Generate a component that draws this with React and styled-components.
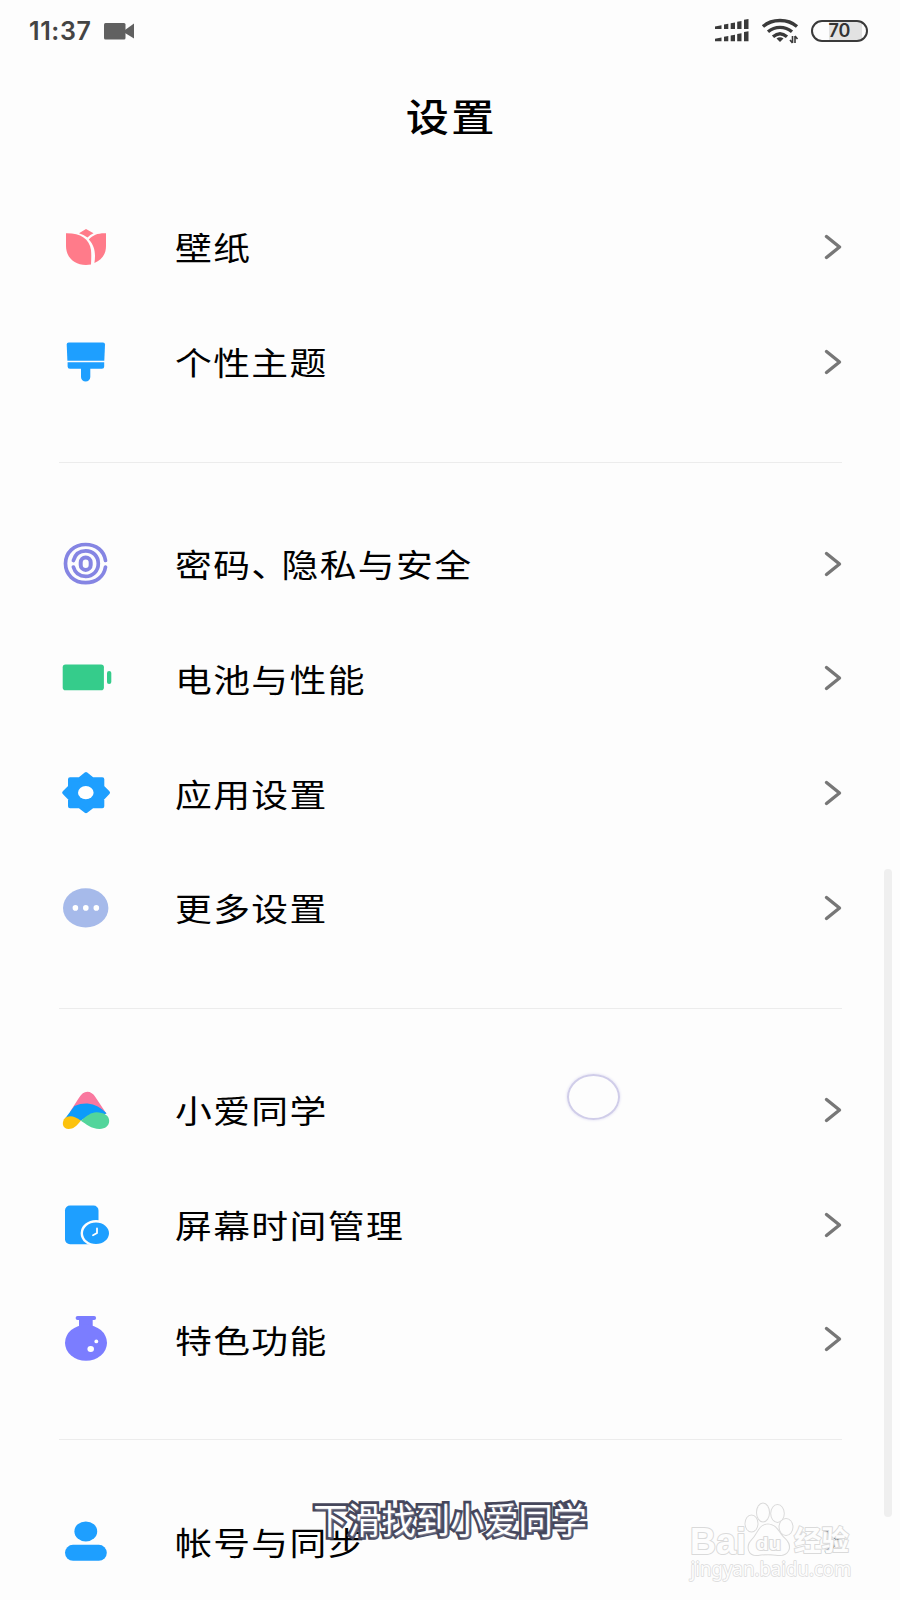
import styled, { createGlobalStyle } from "styled-components";

const GlobalStyle = createGlobalStyle`
  * {
    box-sizing: border-box;
  }
  body {
    margin: 0;
    background-color: #fdfdfd;
    font-family: "Noto Sans CJK SC", sans-serif;
  }
`;

const Screen = styled.main`
  position: relative;
  width: 900px;
  height: 1600px;
  overflow: hidden;
  background-color: #fdfdfd;
`;

const StatusBar = styled.header`
  height: 62px;
  padding: 0 32px 0 29px;
  display: flex;
  align-items: center;
  justify-content: space-between;
`;
const StatusGroup = styled.div`
  display: flex;
  align-items: center;
`;
const Clock = styled.span`
  width: 62px;
  margin-right: 13px;
  font-family: Inter, sans-serif;
  font-size: 25px;
  font-weight: 600;
  line-height: 30px;
  letter-spacing: 0.6px;
  white-space: nowrap;
  color: #444444;
`;
const BatteryPill = styled.span`
  width: 57px;
  height: 22px;
  margin-left: 12px;
  display: flex;
  align-items: center;
  justify-content: center;
  border: 2px solid #3a3a3a;
  border-radius: 11px;
  background: linear-gradient(
    90deg,
    #fdfdfd 30%,
    #e2e2e2 30%,
    #e2e2e2 92%,
    #fdfdfd 92%
  );
  font-family: Inter, sans-serif;
  font-size: 18px;
  font-weight: 600;
  line-height: 18px;
  color: #333333;
`;
const WifiSvg = styled.svg`
  width: 37px;
  height: 26px;
  margin-left: 13px;
`;

const Title = styled.h1`
  height: 127.6px;
  margin: 0;
  padding-top: 30px;
  text-align: center;
  font-size: 37.5px;
  font-weight: 500;
  line-height: 46px;
  letter-spacing: 2px;
  text-indent: 2px;
  color: #000000;
  transform: scaleX(1.15);
`;

const Group = styled.section`
  margin: 0 58px 0 59px;

  & + & {
    margin-top: 43px;
    padding-top: 43.7px;
    border-top: 1px solid #ececec;
  }
`;
const Row = styled.div`
  height: 114.62px;
  margin-right: -1px;
  padding-left: 1px;
  display: flex;
  align-items: center;
`;
const RowIcon = styled.svg`
  width: 52px;
  height: 52px;
  flex: none;
  overflow: visible;
`;
const Label = styled.span`
  flex: 1;
  margin-left: 62.5px;
  padding-bottom: 1px;
  font-size: 32px;
  font-weight: 400;
  line-height: 46px;
  letter-spacing: 1.2px;
  white-space: nowrap;
  color: #000000;
  transform: scaleX(1.15);
  transform-origin: left;
`;
const Comma = styled.span`
  margin-right: -7px;
`;
const Chevron = styled.svg`
  width: 20px;
  height: 28px;
  flex: none;
`;

const ScrollThumb = styled.div`
  position: absolute;
  top: 869px;
  left: 884px;
  width: 8px;
  height: 648px;
  border-radius: 4px;
  background-color: #efefef;
`;
const TouchPoint = styled.div`
  position: absolute;
  top: 1074px;
  left: 567px;
  width: 53px;
  height: 46px;
  border: 2px solid #d0cde9;
  border-radius: 50%;
  box-shadow: 0 0 3px #dcdaf2;
`;
const Subtitle = styled.p`
  position: absolute;
  top: 1490px;
  left: 0;
  width: 900px;
  margin: 0;
  text-align: center;
  font-size: 36px;
  font-weight: 400;
  line-height: 56px;
  white-space: nowrap;
  color: #ffffff;
  -webkit-text-stroke: 5.5px #45465b;
  paint-order: stroke fill;
  text-shadow: 1px 1px 2px #8b8b9c;
  transform: scaleX(0.95);
`;
const Watermark = styled.svg`
  position: absolute;
  top: 1495px;
  left: 685px;
  width: 175px;
  height: 95px;
  fill: #fdfdfd;
  stroke: #dadada;
  stroke-width: 2;
  stroke-linejoin: round;
  paint-order: stroke fill;
`;

const icons = {
  wallpaper: (
    <g fill="#ff7b8a">
      <path d="M19 12.2 26 8l7.5 4.2q-3.3 1.4-6 4.2-4-3-8.500-4.200Z" />
      <path d="M6 12.300C20 12 29.500 17.500 31 29c.5 5 .2 10 0 14.500C17 46 6 38 6 25Z" />
      <path d="M46 12.300C38 12 33 14 28.800 18.500 34.500 24.500 36 32 34.400 42 42 39 46 33 46 25Z" />
    </g>
  ),
  theme: (
    <g fill="#1e9fff">
      <path d="M8.700 6.500H43q2 0 2 2L44.300 24.800H7.400L6.700 8.500q0-2 2-2Z" />
      <path d="M7.600 26.300H44.200V30.500q0 2.300-2.300 2.300H30.300V41a4.650 4.600 0 0 1-9.300 0V32.800H9.900q-2.300 0-2.300-2.300Z" />
    </g>
  ),
  privacy: (
    <g fill="none" stroke="#8585e3" strokeWidth="3.700" strokeLinecap="round">
      <path d="M45.500 22.500C44 12.500 36 6.500 25.700 6.500 14 6.500 5.500 14.500 5.500 25.600S14 44.700 25.700 44.700c10.300 0 18.300-6 19.800-15.700" />
      <path d="M13.400 22.500C15 16.500 19.500 12.800 25.700 12.800c7.200 0 12.600 5.400 12.600 12.800s-5.400 12.800-12.600 12.800c-6.200 0-10.700-3.700-12.300-9.300" />
      <rect x="20.700" y="19.500" width="10" height="12.400" rx="5" strokeWidth="4" />
    </g>
  ),
  battery: (
    <g fill="#35cc8b">
      <rect x="2.700" y="12.500" width="41.200" height="25.700" rx="2.800" />
      <rect x="47" y="19" width="4.300" height="13" rx="2.100" />
    </g>
  ),
  apps: (
    <>
      <path
        d="M26 7 32.500 12.200H42.300V19.800L48 25.700 42.300 31.500V39.200H32.500L26 44.300 19.500 39.200H10V31.500L4.200 25.700 10 19.800V12.200H19.500Z"
        fill="#1e9fff"
        stroke="#1e9fff"
        strokeWidth="4"
        strokeLinejoin="round"
      />
      <ellipse cx="25.800" cy="25.700" rx="7.800" ry="6.600" fill="#ffffff" />
    </>
  ),
  more: (
    <>
      <ellipse cx="25.700" cy="25.900" rx="22.700" ry="19.600" fill="#a6baea" />
      <g fill="#ffffff">
        <circle cx="15.400" cy="25.900" r="2.800" />
        <circle cx="25.800" cy="25.900" r="2.800" />
        <circle cx="36.300" cy="25.900" r="2.800" />
      </g>
    </>
  ),
  xiaoai: (
    <g transform="translate(0 0.7)">
      <path
        d="M10 27 19 13Q22.500 7 27.300 7T35.500 12.500L46.500 29 30 30Z"
        fill="#f9789f"
      />
      <path
        d="M4.500 34.500 14.500 21.200Q21 18.500 27.500 18.800C35 19.500 41 23 46.500 28.500L37 33.500 28 31.500 20.500 36Q14 37 4.500 34.500Z"
        fill="#0c9bfa"
      />
      <path
        d="M4 34.500C8 30 14.500 31 20.800 36 16 42 13 44.300 8.500 44.200 3 44 1.500 39 4 34.500Z"
        fill="#fcc20d"
      />
      <path
        d="M20.800 36C27 31 31 27.500 36.500 27.500 44 27.500 49.200 31 49.200 36c0 5-4 8.200-9.500 8.200C31 44.200 26 39 20.800 36Z"
        fill="#52d59b"
      />
    </g>
  ),
  screenTime: (
    <>
      <rect x="5" y="6.500" width="33.500" height="38.700" rx="5" fill="#1e9fff" />
      <ellipse
        cx="36"
        cy="34.200"
        rx="14.200"
        ry="12"
        fill="#1e9fff"
        stroke="#fdfdfd"
        strokeWidth="2.400"
      />
      <path
        d="M37 29.500V34L33 36.300"
        fill="none"
        stroke="#ffffff"
        strokeWidth="1.800"
        strokeLinecap="round"
      />
    </>
  ),
  features: (
    <g transform="translate(0 0.5)">
      <g fill="#7b7dff">
        <rect x="15.600" y="2.500" width="20.500" height="4" rx="2" />
        <path d="M19 5H32.700V14H19Z" />
        <ellipse cx="26" cy="29.300" rx="21" ry="18" />
      </g>
      <ellipse cx="30.700" cy="35.500" rx="3.300" ry="3" fill="#ffffff" />
      <circle cx="36.300" cy="27.900" r="1.900" fill="#ffffff" />
    </g>
  ),
  account: (
    <g fill="#1e9fff">
      <ellipse cx="25.800" cy="16.400" rx="11.400" ry="10" />
      <rect x="5" y="29.800" width="41.800" height="16" rx="8" />
    </g>
  ),
};

const groups = [
  [
    { icon: "wallpaper", label: "壁纸" },
    { icon: "theme", label: "个性主题" },
  ],
  [
    {
      icon: "privacy",
      label: (
        <>
          密码<Comma>、</Comma>隐私与安全
        </>
      ),
    },
    { icon: "battery", label: "电池与性能" },
    { icon: "apps", label: "应用设置" },
    { icon: "more", label: "更多设置" },
  ],
  [
    { icon: "xiaoai", label: "小爱同学" },
    { icon: "screenTime", label: "屏幕时间管理" },
    { icon: "features", label: "特色功能" },
  ],
  [{ icon: "account", label: "帐号与同步" }],
];

function SignalIcon() {
  return (
    <svg width="34" height="24" viewBox="0 0 34 24" fill="#3a3a3a">
      {[0, 12.200].map((y) => (
        <g key={y} transform={`translate(0 ${y})`}>
          <path d="M0 7.500 6.500 6.300V10H0Z" />
          <path d="M9 5.500 13.300 4.800V10H9Z" />
          <path d="M15.700 4.300 20 3.500V10H15.700Z" />
          <path d="M22.200 2.800 26.500 2V10H22.200Z" />
          <path d="M29 .800 33.500 0V10H29Z" />
        </g>
      ))}
    </svg>
  );
}

function WifiIcon() {
  return (
    <WifiSvg viewBox="0 0 37 26" fill="none" stroke="#3a3a3a" strokeWidth="3.300">
      <path d="M1 8.500C10 .500 26 .500 35 8.500" />
      <path d="M6 13.800C13 7.800 23 7.800 30 13.800" />
      <path d="M11 18.700C15.500 14.800 20.500 14.800 25 18.700" />
      <path
        d="M14.500 20.500Q18 18 21.500 20.500L18 24Z"
        fill="#3a3a3a"
        stroke="none"
      />
      <path
        d="M30.500 18v7M28 22l2.500 3M33 18v7M35.500 21 33 18"
        strokeWidth="1.600"
      />
    </WifiSvg>
  );
}

export default function App() {
  return (
    <Screen>
      <GlobalStyle />
      <StatusBar>
        <StatusGroup>
          <Clock>11:37</Clock>
          <svg width="30" height="17" viewBox="0 0 30 17" fill="#606060">
            <rect width="21.500" height="16.500" rx="1.500" />
            <path d="M21 7 30 .500V15.500L21 10Z" />
          </svg>
        </StatusGroup>
        <StatusGroup>
          <SignalIcon />
          <WifiIcon />
          <BatteryPill>70</BatteryPill>
        </StatusGroup>
      </StatusBar>
      <Title>设置</Title>
      {groups.map((rows, index) => (
        <Group key={index}>
          {rows.map(({ icon, label }) => (
            <Row key={icon}>
              <RowIcon viewBox="0 0 52 52">{icons[icon]}</RowIcon>
              <Label>{label}</Label>
              <Chevron viewBox="0 0 20 28" fill="none">
                <path
                  d="M3.500 3.500 16.500 14 3.500 24.500"
                  stroke="#777777"
                  strokeWidth="3.400"
                  strokeLinecap="round"
                  strokeLinejoin="round"
                />
              </Chevron>
            </Row>
          ))}
        </Group>
      ))}
      <ScrollThumb />
      <TouchPoint />
      <Watermark viewBox="0 0 175 95">
        <text
          x="5"
          y="58.500"
          fontFamily="Liberation Sans, sans-serif"
          fontSize="37"
          fontWeight="700"
          textLength="56"
          lengthAdjust="spacingAndGlyphs"
        >
          Bai
        </text>
        <ellipse cx="66.500" cy="28.500" rx="6" ry="8" />
        <ellipse cx="78" cy="17.500" rx="6" ry="9" />
        <ellipse cx="92.500" cy="18.500" rx="6.300" ry="8.500" />
        <ellipse cx="101" cy="32" rx="6.500" ry="8" />
        <path d="M83 29.500C92 29.500 94 39 100 44 108 52 103 61 93 60 87 59 79 59 73 60 63 61 61 51 67 45 73 39 74 29.500 83 29.500Z" />
        <text
          x="71"
          y="55"
          fontFamily="Liberation Sans, sans-serif"
          fontSize="19"
          fontWeight="700"
          textLength="25"
          lengthAdjust="spacingAndGlyphs"
        >
          du
        </text>
        <text
          x="109"
          y="56"
          fontFamily="Noto Sans CJK SC, sans-serif"
          fontSize="28.500"
          fontWeight="700"
          textLength="55"
          lengthAdjust="spacingAndGlyphs"
        >
          经验
        </text>
        <text
          x="5.500"
          y="80.500"
          fontFamily="Noto Sans, sans-serif"
          fontSize="19.500"
          textLength="161"
          lengthAdjust="spacingAndGlyphs"
          strokeWidth="1.500"
        >
          jingyan.baidu.com
        </text>
      </Watermark>
      <Subtitle>下滑找到小爱同学</Subtitle>
    </Screen>
  );
}
